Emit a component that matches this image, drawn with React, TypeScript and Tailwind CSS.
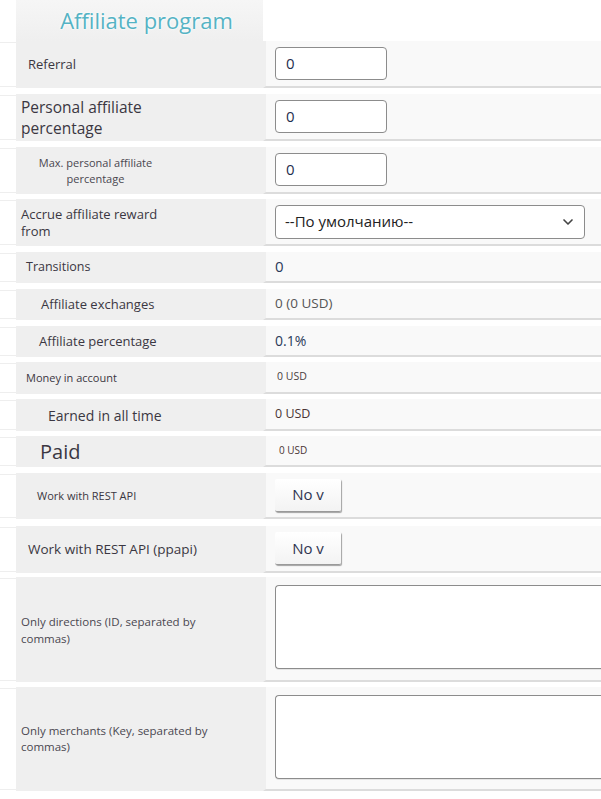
import React from 'react';

type Row = {
  h: number;
  mt: number;
  label: React.ReactNode;
  value: React.ReactNode;
};

const ChevronDown: React.FC<{ className?: string }> = ({ className }) => (
  <svg xmlns="http://www.w3.org/2000/svg" viewBox="0 0 24 24" fill="none" stroke="currentColor" strokeWidth="2.5" strokeLinecap="round" strokeLinejoin="round" className={className}>
    <polyline points="6 9 12 15 18 9" />
  </svg>
);

const TextInput: React.FC = () => (
  <div className="w-[112px] h-[33px] bg-white border border-[#8c8c8c] rounded-[4px] flex items-center pl-[10px] text-[15px] text-[#1f2f4f]">
    0
  </div>
);

const NoButton: React.FC = () => (
  <div className="w-[66px] h-[33px] bg-gradient-to-b from-white to-[#f3f3f3] rounded-[2px] shadow-[1px_1px_1px_rgba(0,0,0,0.35)] border-b border-[#9a9a9a] flex items-center justify-center text-[15px] text-[#2f3550]">
    No v
  </div>
);

const TextArea: React.FC = () => (
  <div className="w-full h-[84px] -mt-[3px] bg-white border border-[#8c8c8c] border-r-0 rounded-l-[4px] shadow-[0_1px_0_#e4e4e4]" />
);

const rows: Row[] = [
  {
    h: 47, mt: 0,
    label: <span className="pl-[12px] text-[13px]">Referral</span>,
    value: <TextInput />,
  },
  {
    h: 47, mt: 6,
    label: <span className="pl-[5px] text-[15.5px] leading-[21px] max-w-[150px]">Personal affiliate percentage</span>,
    value: <TextInput />,
  },
  {
    h: 47, mt: 6,
    label: <span className="pl-[22px] text-[11px] leading-[16px] text-center w-[137px] text-[#4a4750]">Max. personal affiliate percentage</span>,
    value: <TextInput />,
  },
  {
    h: 47, mt: 5,
    label: <span className="pl-[5px] text-[13px] leading-[17px] max-w-[160px]">Accrue affiliate reward from</span>,
    value: (
      <div className="w-[310px] h-[34px] bg-white border border-[#8c8c8c] rounded-[4px] flex items-center justify-between pl-[9px] pr-[8px] text-[15px] text-[#222]">
        <span>--По умолчанию--</span>
        <ChevronDown className="w-[16px] h-[16px] text-[#444]" />
      </div>
    ),
  },
  {
    h: 31, mt: 6,
    label: <span className="pl-[10px] text-[12.5px]">Transitions</span>,
    value: <span className="text-[15px] text-[#2a3a5a]">0</span>,
  },
  {
    h: 31, mt: 6,
    label: <span className="pl-[25px] text-[13px]">Affiliate exchanges</span>,
    value: <span className="text-[13.5px] text-[#555]">0 (0 USD)</span>,
  },
  {
    h: 31, mt: 6,
    label: <span className="pl-[23px] text-[13px]">Affiliate percentage</span>,
    value: <span className="text-[14px] text-[#2a3a5a]">0.1%</span>,
  },
  {
    h: 32, mt: 5,
    label: <span className="pl-[10px] text-[11px]">Money in account</span>,
    value: <span className="pl-[2px] text-[10.5px] text-[#4a4040]">0 USD</span>,
  },
  {
    h: 32, mt: 5,
    label: <span className="pl-[32px] text-[14px]">Earned in all time</span>,
    value: <span className="text-[12.5px] text-[#4a3535]">0 USD</span>,
  },
  {
    h: 31, mt: 5,
    label: <span className="pl-[24px] text-[20px]">Paid</span>,
    value: <span className="pl-[4px] text-[10px] text-[#4a3535]">0 USD</span>,
  },
  {
    h: 46, mt: 6,
    label: <span className="pl-[21px] text-[11px]">Work with REST API</span>,
    value: <NoButton />,
  },
  {
    h: 47, mt: 7,
    label: <span className="pl-[12px] text-[13.5px]">Work with REST API (ppapi)</span>,
    value: <NoButton />,
  },
  {
    h: 105, mt: 4,
    label: <span className="pl-[5px] text-[11.5px] leading-[17px] max-w-[220px] text-[#4a4750]">Only directions (ID, separated by commas)</span>,
    value: <TextArea />,
  },
  {
    h: 104, mt: 5,
    label: <span className="pl-[5px] text-[11.5px] leading-[16px] max-w-[220px] text-[#4a4750]">Only merchants (Key, separated by commas)</span>,
    value: <TextArea />,
  },
];

export default function App() {
  return (
    <div className="w-[601px] h-[799px] bg-white overflow-hidden text-[#3b3742]" style={{ fontFamily: '"Open Sans", "Noto Sans", sans-serif' }}>
      <div className="flex h-[41px]">
        <div className="w-[16px]" />
        <div className="w-[247px] bg-gradient-to-b from-[#f6f6f6] to-[#efefef] flex items-center justify-center pl-[14px]">
          <h1 className="text-[22px] text-[#55b3c4] [text-shadow:0_0_2px_#fff,0_0_3px_#fff]">Affiliate program</h1>
        </div>
        <div className="flex-1" />
      </div>
      {rows.map((r, i) => (
        <div key={i} className="flex" style={{ height: r.h, marginTop: r.mt }}>
          <div className="w-[16px] border-t border-b border-[#eeeeee] my-[1px]" />
          <div className="w-[247px] bg-[#efefef] flex items-center">
            <div className="flex">{r.label}</div>
          </div>
          <div className="flex-1 bg-[#f9f9f9] border-l-[3px] border-l-[#efefef] border-b-2 border-b-[#dcdcdc] flex items-center pl-[9px]">
            {r.value}
          </div>
        </div>
      ))}
    </div>
  );
}
